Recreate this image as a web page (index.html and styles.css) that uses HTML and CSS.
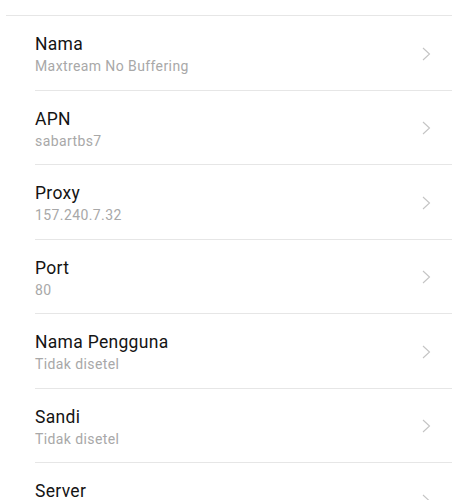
FILE: index.html
```html
<!DOCTYPE html>
<html lang="id">
<head>
<meta charset="utf-8">
<link rel="stylesheet" href="styles.css">
</head>
<body>
<div class="top-rule"></div>
<ul class="list">
  <li class="item"><div class="text"><div class="title">Nama</div><div class="sub">Maxtream No Buffering</div></div><span class="chev"><svg width="9" height="14" viewBox="0 0 9 14"><path d="M1 1 L7.5 7 L1 13" fill="none" stroke="#c4c4c4" stroke-width="1.1"/></svg></span></li>
  <li class="item"><div class="text"><div class="title">APN</div><div class="sub">sabartbs7</div></div><span class="chev"><svg width="9" height="14" viewBox="0 0 9 14"><path d="M1 1 L7.5 7 L1 13" fill="none" stroke="#c4c4c4" stroke-width="1.1"/></svg></span></li>
  <li class="item"><div class="text"><div class="title">Proxy</div><div class="sub">157.240.7.32</div></div><span class="chev"><svg width="9" height="14" viewBox="0 0 9 14"><path d="M1 1 L7.5 7 L1 13" fill="none" stroke="#c4c4c4" stroke-width="1.1"/></svg></span></li>
  <li class="item"><div class="text"><div class="title">Port</div><div class="sub">80</div></div><span class="chev"><svg width="9" height="14" viewBox="0 0 9 14"><path d="M1 1 L7.5 7 L1 13" fill="none" stroke="#c4c4c4" stroke-width="1.1"/></svg></span></li>
  <li class="item"><div class="text"><div class="title">Nama Pengguna</div><div class="sub">Tidak disetel</div></div><span class="chev"><svg width="9" height="14" viewBox="0 0 9 14"><path d="M1 1 L7.5 7 L1 13" fill="none" stroke="#c4c4c4" stroke-width="1.1"/></svg></span></li>
  <li class="item"><div class="text"><div class="title">Sandi</div><div class="sub">Tidak disetel</div></div><span class="chev"><svg width="9" height="14" viewBox="0 0 9 14"><path d="M1 1 L7.5 7 L1 13" fill="none" stroke="#c4c4c4" stroke-width="1.1"/></svg></span></li>
  <li class="item"><div class="text"><div class="title">Server</div><div class="sub sub-hidden">Tidak disetel</div></div><span class="chev"><svg width="9" height="14" viewBox="0 0 9 14"><path d="M1 1 L7.5 7 L1 13" fill="none" stroke="#c4c4c4" stroke-width="1.1"/></svg></span></li>
</ul>
</body>
</html>
```
FILE: styles.css
```css
html, body {
  margin: 0;
  padding: 0;
  background: #ffffff;
  overflow: hidden;
}
body {
  font-family: Roboto, "Noto Sans", sans-serif;
  width: 460px;
  height: 500px;
}
.top-rule {
  margin: 15px 8px 0 6px;
  height: 1px;
  background: #e6e6e6;
}
.list {
  list-style: none;
  margin: 0 8px 0 35px;
  padding: 0;
}
.item {
  height: 73.5px;
  border-bottom: 1px solid #e6e6e6;
  display: flex;
  align-items: center;
  justify-content: space-between;
}
.text {
  display: flex;
  flex-direction: column;
  padding-top: 5px;
}
.title {
  font-size: 17.5px;
  color: #141414;
  letter-spacing: 0.3px;
  line-height: 22px;
}
.sub {
  font-size: 14px;
  color: #a8a8a8;
  letter-spacing: 0.4px;
  line-height: 22px;
}
.sub-hidden {
  visibility: hidden;
}
.chev {
  width: 9px;
  height: 14px;
  margin-top: 2px;
  margin-right: 21px;
  display: flex;
}
```
